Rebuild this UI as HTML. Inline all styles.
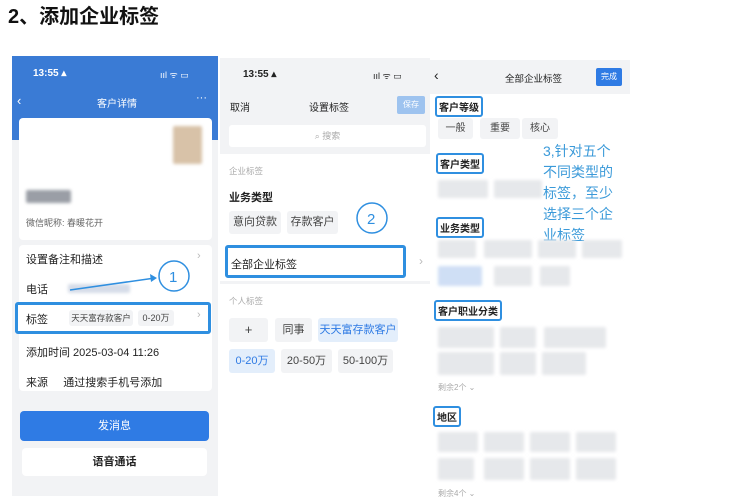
<!DOCTYPE html>
<html><head><meta charset="utf-8"><style>
*{margin:0;padding:0;box-sizing:border-box}
body{width:735px;height:500px;background:#fff;position:relative;overflow:hidden;font-family:"Liberation Sans","Noto Sans CJK SC",sans-serif;color:#222}
.a{position:absolute;white-space:nowrap}
.t{position:absolute;background:#f2f3f5;border-radius:3px;font-size:11px;color:#444;text-align:center}
.b{position:absolute;background:#e6e8eb;border-radius:2px;filter:blur(1.5px)}
.box{position:absolute;border:2px solid #2f8fe0;border-radius:3px;font-size:10px;font-weight:bold;padding:1px 2px;background:#fff}
</style></head><body>
<div class="a" style="left:8px;top:0px;font-size:20px;font-weight:bold;color:#111">2、添加企业标签</div>

<!-- panel 1 -->
<div class="a" style="left:12px;top:56px;width:206px;height:440px;background:#f2f3f5"></div>
<div class="a" style="left:12px;top:56px;width:206px;height:84px;background:#3a7bd5"></div>
<div class="a" style="left:33px;top:68px;font-size:10px;color:#fff;font-weight:bold">13:55 ▴</div>
<div class="a" style="left:160px;top:68px;font-size:9px;color:#fff">ııl ᯤ ▭</div>
<div class="a" style="left:17px;top:93px;font-size:13px;color:#fff">‹</div>
<div class="a" style="left:97px;top:95px;font-size:10px;color:#fff">客户详情</div>
<div class="a" style="left:196px;top:92px;font-size:11px;color:#fff">···</div>
<div class="a" style="left:19px;top:118px;width:193px;height:122px;background:#fff;border-radius:4px"></div>
<div class="b" style="left:173px;top:126px;width:29px;height:38px;background:#d8c2a8"></div>
<div class="b" style="left:26px;top:190px;width:45px;height:13px;background:#9a9ea6"></div>
<div class="a" style="left:26px;top:216px;font-size:9px;color:#666">微信昵称: 春暖花开</div>
<div class="a" style="left:19px;top:245px;width:193px;height:146px;background:#fff;border-radius:4px"></div>
<div class="a" style="left:26px;top:251px;font-size:11px">设置备注和描述</div>
<div class="a" style="left:197px;top:250px;font-size:11px;color:#bbb">›</div>
<div class="a" style="left:26px;top:281px;font-size:11px">电话</div>
<div class="b" style="left:68px;top:284px;width:62px;height:9px;background:#d5dce8"></div>
<svg class="a" style="left:60px;top:258px" width="140" height="40"><line x1="10" y1="32" x2="95" y2="20" stroke="#2f8fe0" stroke-width="1.5"/><polygon points="97,20 90,16 91,24" fill="#2f8fe0"/><circle cx="114" cy="18" r="15" fill="none" stroke="#2f8fe0" stroke-width="1.5"/><text x="109" y="24" font-size="15" fill="#2f8fe0" font-family="Liberation Sans">1</text></svg>
<div class="a" style="left:15px;top:302px;width:196px;height:32px;border:3px solid #2f8fe0;border-radius:3px;background:#fff"></div>
<div class="a" style="left:26px;top:311px;font-size:11px">标签</div>
<div class="t" style="left:69px;top:310px;width:64px;height:16px;font-size:8.5px;line-height:16px">天天富存款客户</div>
<div class="t" style="left:138px;top:310px;width:36px;height:16px;font-size:9px;line-height:16px">0-20万</div>
<div class="a" style="left:197px;top:309px;font-size:11px;color:#bbb">›</div>
<div class="a" style="left:26px;top:344px;font-size:11px">添加时间 2025-03-04 11:26</div>
<div class="a" style="left:26px;top:374px;font-size:11px">来源&nbsp;&nbsp;&nbsp;&nbsp;&nbsp;通过搜索手机号添加</div>
<div class="a" style="left:20px;top:411px;width:189px;height:30px;background:#2f7be4;border-radius:4px;color:#fff;font-size:11px;text-align:center;line-height:30px">发消息</div>
<div class="a" style="left:22px;top:448px;width:185px;height:28px;background:#fff;border-radius:4px;font-size:11px;text-align:center;line-height:28px;font-weight:bold">语音通话</div>

<!-- panel 2 -->
<div class="a" style="left:220px;top:58px;width:210px;height:440px;background:#fff"></div>
<div class="a" style="left:220px;top:58px;width:210px;height:96px;background:#f2f3f5"></div>
<div class="a" style="left:243px;top:69px;font-size:10px;font-weight:bold">13:55 ▴</div>
<div class="a" style="left:373px;top:69px;font-size:9px">ııl ᯤ ▭</div>
<div class="a" style="left:230px;top:99px;font-size:10px">取消</div>
<div class="a" style="left:309px;top:99px;font-size:10px">设置标签</div>
<div class="a" style="left:397px;top:96px;width:28px;height:18px;background:#9ec3ef;border-radius:2px;color:#fff;font-size:8px;text-align:center;line-height:18px">保存</div>
<div class="a" style="left:229px;top:125px;width:197px;height:22px;background:#fff;border-radius:3px;text-align:center;font-size:9px;color:#aaa;line-height:22px">⌕ 搜索</div>
<div class="a" style="left:229px;top:165px;font-size:8.5px;color:#aaa">企业标签</div>
<div class="a" style="left:229px;top:189px;font-size:11px;font-weight:bold">业务类型</div>
<div class="t" style="left:229px;top:211px;width:52px;height:23px;line-height:23px">意向贷款</div>
<div class="t" style="left:287px;top:211px;width:51px;height:23px;line-height:23px">存款客户</div>
<svg class="a" style="left:355px;top:201px" width="34" height="34"><circle cx="17" cy="17" r="15" fill="none" stroke="#2f8fe0" stroke-width="1.5"/><text x="12" y="23" font-size="15" fill="#2f8fe0" font-family="Liberation Sans">2</text></svg>
<div class="a" style="left:225px;top:245px;width:181px;height:33px;border:3px solid #2f8fe0;border-radius:3px;background:#fff;font-size:11px;padding:8px 0 0 3px">全部企业标签</div>
<div class="a" style="left:419px;top:254px;font-size:12px;color:#bbb">›</div>
<div class="a" style="left:220px;top:281px;width:210px;height:3px;background:#f2f3f5"></div>
<div class="a" style="left:229px;top:295px;font-size:8.5px;color:#aaa">个人标签</div>
<div class="t" style="left:229px;top:318px;width:39px;height:24px;line-height:24px;font-size:13px">+</div>
<div class="t" style="left:275px;top:318px;width:37px;height:24px;line-height:24px">同事</div>
<div class="t" style="left:318px;top:318px;width:80px;height:24px;line-height:24px;background:#e3eefb;color:#2f7be4">天天富存款客户</div>
<div class="t" style="left:229px;top:349px;width:46px;height:24px;line-height:24px;background:#e3eefb;color:#2f7be4">0-20万</div>
<div class="t" style="left:281px;top:349px;width:51px;height:24px;line-height:24px">20-50万</div>
<div class="t" style="left:338px;top:349px;width:55px;height:24px;line-height:24px">50-100万</div>

<!-- panel 3 -->
<div class="a" style="left:430px;top:60px;width:200px;height:34px;background:#f2f3f5"></div>
<div class="a" style="left:434px;top:67px;font-size:14px">‹</div>
<div class="a" style="left:505px;top:71px;font-size:9.5px">全部企业标签</div>
<div class="a" style="left:596px;top:68px;width:26px;height:18px;background:#2f7be4;border-radius:2px;color:#fff;font-size:8px;text-align:center;line-height:18px">完成</div>
<div class="box" style="left:435px;top:96px">客户等级</div>
<div class="t" style="left:438px;top:118px;width:35px;height:21px;line-height:21px;font-size:10px">一般</div>
<div class="t" style="left:480px;top:118px;width:40px;height:21px;line-height:21px;font-size:10px">重要</div>
<div class="t" style="left:522px;top:118px;width:36px;height:21px;line-height:21px;font-size:10px">核心</div>
<div class="a" style="left:543px;top:141px;font-size:14px;line-height:21px;color:#3b9ad9">3,针对五个<br>不同类型的<br>标签，至少<br>选择三个企<br>业标签</div>
<div class="box" style="left:436px;top:153px">客户类型</div>
<div class="b" style="left:438px;top:180px;width:50px;height:18px"></div>
<div class="b" style="left:494px;top:180px;width:48px;height:18px"></div>
<div class="box" style="left:436px;top:217px">业务类型</div>
<div class="b" style="left:438px;top:240px;width:38px;height:18px"></div>
<div class="b" style="left:484px;top:240px;width:48px;height:18px"></div>
<div class="b" style="left:538px;top:240px;width:38px;height:18px"></div>
<div class="b" style="left:582px;top:240px;width:40px;height:18px"></div>
<div class="b" style="left:438px;top:266px;width:44px;height:20px;background:#cfdff5"></div>
<div class="b" style="left:494px;top:266px;width:38px;height:20px"></div>
<div class="b" style="left:540px;top:266px;width:30px;height:20px"></div>
<div class="box" style="left:434px;top:300px">客户职业分类</div>
<div class="b" style="left:438px;top:327px;width:56px;height:21px"></div>
<div class="b" style="left:500px;top:327px;width:36px;height:21px"></div>
<div class="b" style="left:544px;top:327px;width:62px;height:21px"></div>
<div class="b" style="left:438px;top:352px;width:56px;height:23px"></div>
<div class="b" style="left:500px;top:352px;width:36px;height:23px"></div>
<div class="b" style="left:542px;top:352px;width:44px;height:23px"></div>
<div class="a" style="left:438px;top:382px;font-size:8px;color:#aaa">剩余2个 ⌄</div>
<div class="box" style="left:433px;top:406px">地区</div>
<div class="b" style="left:438px;top:432px;width:40px;height:20px"></div>
<div class="b" style="left:484px;top:432px;width:40px;height:20px"></div>
<div class="b" style="left:530px;top:432px;width:40px;height:20px"></div>
<div class="b" style="left:576px;top:432px;width:40px;height:20px"></div>
<div class="b" style="left:438px;top:458px;width:36px;height:22px"></div>
<div class="b" style="left:484px;top:458px;width:40px;height:22px"></div>
<div class="b" style="left:530px;top:458px;width:40px;height:22px"></div>
<div class="b" style="left:576px;top:458px;width:40px;height:22px"></div>
<div class="a" style="left:438px;top:488px;font-size:8px;color:#aaa">剩余4个 ⌄</div>
</body></html>
